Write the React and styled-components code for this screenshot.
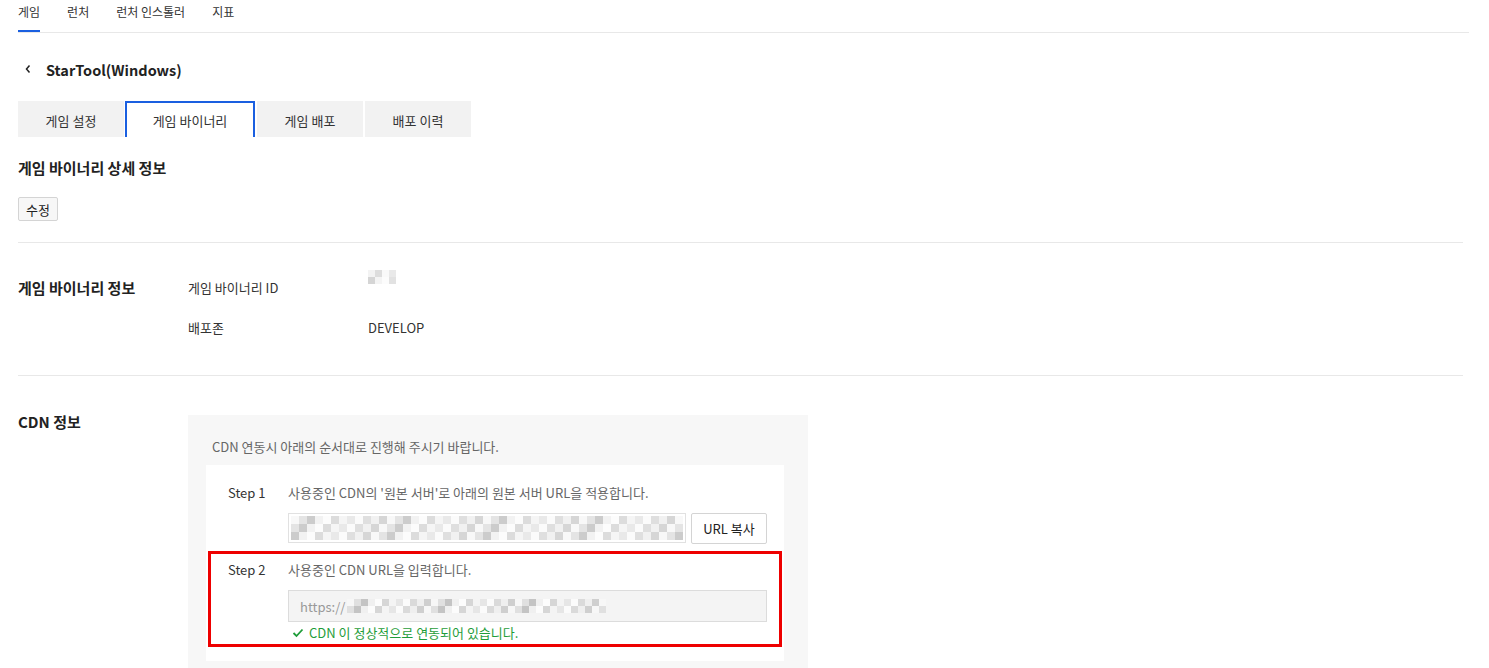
import React from "react";
import styled, { createGlobalStyle } from "styled-components";

const GlobalStyle = createGlobalStyle`
  body {
    margin: 0;
    background: #fff;
    font-family: "Noto Sans CJK KR", "Noto Sans", sans-serif;
    color: #222;
  }
`;

const shades = [
  "#f4f4f4", "#e6e6e6", "#fbfbfb", "#dadada", "#efefef", "#cfcfcf",
  "#f7f7f7", "#e0e0e0", "#c4c4c4", "#f0f0f0", "#fcfcfc", "#d6d6d6",
];

const makeCells = (count, seed) => {
  const out = [];
  let s = seed;
  for (let i = 0; i < count; i++) {
    s = (s * 9301 + 49297) % 233280;
    out.push(shades[s % shades.length]);
  }
  return out;
};

const Pixels = ({ cols, rows, size, seed }) => {
  const cells = makeCells(cols * rows, seed);
  return (
    <PixelGrid cols={cols} size={size}>
      {cells.map((c, i) => (
        <Cell key={i} style={{ background: c }} />
      ))}
    </PixelGrid>
  );
};

const App = () => {
  return (
    <>
      <GlobalStyle />
      <Page>
        <TopNav>
          <NavItem active>게임</NavItem>
          <NavItem>런처</NavItem>
          <NavItem>런처 인스톨러</NavItem>
          <NavItem>지표</NavItem>
        </TopNav>

        <TitleRow>
          <svg width="8" height="10" viewBox="0 0 8 10">
            <path d="M5.5 1.5 L2.5 5 L5.5 8.5" fill="none" stroke="#222" strokeWidth="1.5" />
          </svg>
          <Title>StarTool(Windows)</Title>
        </TitleRow>

        <Tabs>
          <Tab w={106}>게임 설정</Tab>
          <Tab w={130} active>게임 바이너리</Tab>
          <Tab w={106}>게임 배포</Tab>
          <Tab w={106}>배포 이력</Tab>
        </Tabs>

        <Heading>게임 바이너리 상세 정보</Heading>
        <SmallButton>수정</SmallButton>

        <Divider gap={21} />

        <Section>
          <SectionTitle>게임 바이너리 정보</SectionTitle>
          <InfoGrid>
            <Label>게임 바이너리 ID</Label>
            <Value>
              <IdBlur>
                <Pixels cols={4} rows={2} size={7} seed={3} />
              </IdBlur>
            </Value>
            <Label>배포존</Label>
            <Value>DEVELOP</Value>
          </InfoGrid>
        </Section>

        <Divider gap={0} />

        <CdnSection>
          <SectionTitle top>CDN 정보</SectionTitle>
          <CdnBox>
            <Intro>CDN 연동시 아래의 순서대로 진행해 주시기 바랍니다.</Intro>
            <Steps>
              <StepRow>
                <StepLabel>Step 1</StepLabel>
                <StepBody>
                  <StepDesc>사용중인 CDN의 '원본 서버'로 아래의 원본 서버 URL을 적용합니다.</StepDesc>
                  <InputRow>
                    <UrlBox>
                      <Pixels cols={49} rows={3} size={8} seed={17} />
                    </UrlBox>
                    <CopyButton>URL 복사</CopyButton>
                  </InputRow>
                </StepBody>
              </StepRow>
              <Highlight>
                <StepRow>
                  <StepLabel>Step 2</StepLabel>
                  <StepBody>
                    <StepDesc>사용중인 CDN URL을 입력합니다.</StepDesc>
                    <DisabledInput>
                      <Https>https://</Https>
                      <Pixels cols={37} rows={2} size={7} seed={41} />
                    </DisabledInput>
                    <Success>
                      <svg width="12" height="10" viewBox="0 0 12 10">
                        <path d="M1.5 5 L4.5 8 L10.5 1.5" fill="none" stroke="#1f9d3a" strokeWidth="1.8" />
                      </svg>
                      CDN 이 정상적으로 연동되어 있습니다.
                    </Success>
                  </StepBody>
                </StepRow>
              </Highlight>
            </Steps>
          </CdnBox>
        </CdnSection>
      </Page>
    </>
  );
};

const Page = styled.div`
  padding: 0 20px 0 18px;
  height: 668px;
  overflow: hidden;
  box-sizing: border-box;
`;

const TopNav = styled.div`
  display: flex;
  gap: 27px;
  height: 33px;
  border-bottom: 1px solid #e8e8e8;
  box-sizing: border-box;
`;

const NavItem = styled.div`
  font-size: 12px;
  color: #333;
  line-height: 24px;
  height: 32px;
  box-sizing: border-box;
  border-bottom: 2px solid ${({ active }) => (active ? "#1a5fe0" : "transparent")};
`;

const TitleRow = styled.div`
  display: flex;
  align-items: center;
  gap: 14px;
  padding: 23px 0 0 6px;
  height: 26px;
`;

const Title = styled.div`
  font-size: 14.5px;
  font-weight: 700;
  color: #222;
`;

const Tabs = styled.div`
  display: flex;
  gap: 2px;
  margin-top: 19px;
`;

const Tab = styled.div`
  width: ${({ w }) => w}px;
  height: 36px;
  display: flex;
  align-items: center;
  justify-content: center;
  font-size: 13px;
  color: #333;
  box-sizing: border-box;
  background: ${({ active }) => (active ? "#fff" : "#f2f2f2")};
  border: 2px solid ${({ active }) => (active ? "#1a5fe0" : "transparent")};
  border-bottom: none;
  margin-left: ${({ active }) => (active ? "-1px" : "0")};
`;

const Heading = styled.div`
  font-size: 15px;
  font-weight: 700;
  margin-top: 19px;
  line-height: 24px;
`;

const SmallButton = styled.button`
  margin-top: 17px;
  width: 40px;
  height: 24px;
  padding: 0;
  font-family: inherit;
  font-size: 13px;
  color: #222;
  background: #f7f7f7;
  border: 1px solid #d4d4d4;
  border-radius: 2px;
  display: block;
`;

const Divider = styled.div`
  height: 1px;
  background: #e8e8e8;
  margin-right: 6px;
  margin-top: ${({ gap }) => gap}px;
`;

const Section = styled.div`
  display: flex;
  padding: 31px 0 33px;
`;

const SectionTitle = styled.div`
  width: 170px;
  font-size: 15px;
  font-weight: 700;
  line-height: ${({ top }) => (top ? "14px" : "28px")};
  flex-shrink: 0;
`;

const InfoGrid = styled.div`
  display: grid;
  grid-template-columns: 180px auto;
  row-gap: 12px;
`;

const Label = styled.div`
  font-size: 13px;
  color: #333;
  line-height: 28px;
`;

const Value = styled.div`
  font-size: 13px;
  color: #333;
  line-height: 28px;
`;

const IdBlur = styled.div`
  margin-top: -4px;
  opacity: 0.7;
`;

const CdnSection = styled.div`
  display: flex;
  padding-top: 39px;
`;

const CdnBox = styled.div`
  width: 620px;
  background: #f7f7f7;
  padding: 20px 24px 8px 18px;
  box-sizing: border-box;
`;

const Intro = styled.div`
  font-size: 13px;
  color: #666;
  line-height: 24px;
  padding-left: 6px;
`;

const Steps = styled.div`
  margin-top: 6px;
  background: #fff;
  padding: 15px 2px 14px 2px;
`;

const StepRow = styled.div`
  display: flex;
  padding-left: 20px;
`;

const Highlight = styled.div`
  margin-top: 7px;
  border: 3px solid #ee0000;
  padding: 3px 0 1px;
  ${StepRow} {
    padding-left: 17px;
  }
`;

const StepLabel = styled.div`
  width: 60px;
  font-size: 13px;
  color: #333;
  line-height: 26px;
`;

const StepBody = styled.div`
  display: flex;
  flex-direction: column;
  gap: 7px;
`;

const StepDesc = styled.div`
  font-size: 13px;
  color: #666;
  line-height: 26px;
`;

const InputRow = styled.div`
  display: flex;
  gap: 5px;
`;

const UrlBox = styled.div`
  width: 398px;
  height: 30px;
  box-sizing: border-box;
  border: 1px solid #dcdcdc;
  padding: 2px 0 0 2px;
  overflow: hidden;
  opacity: 0.85;
`;

const CopyButton = styled.button`
  width: 76px;
  height: 31px;
  font-family: inherit;
  font-size: 13px;
  color: #222;
  background: #fff;
  border: 1px solid #d4d4d4;
  border-radius: 2px;
  padding: 0;
`;

const DisabledInput = styled.div`
  width: 479px;
  height: 32px;
  box-sizing: border-box;
  background: #f4f4f4;
  border: 1px solid #dcdcdc;
  display: flex;
  align-items: center;
  padding-left: 11px;
  overflow: hidden;
`;

const Https = styled.span`
  font-size: 13px;
  color: #999;
  margin-right: 2px;
`;

const Success = styled.div`
  display: flex;
  align-items: center;
  gap: 5px;
  font-size: 13px;
  color: #1f9d3a;
  padding-left: 4px;
  margin-top: -6px;
  line-height: 20px;
`;

const PixelGrid = styled.div`
  display: grid;
  grid-template-columns: repeat(${({ cols }) => cols}, ${({ size }) => size}px);
  grid-auto-rows: ${({ size }) => size}px;
`;

const Cell = styled.div``;

export default App;
